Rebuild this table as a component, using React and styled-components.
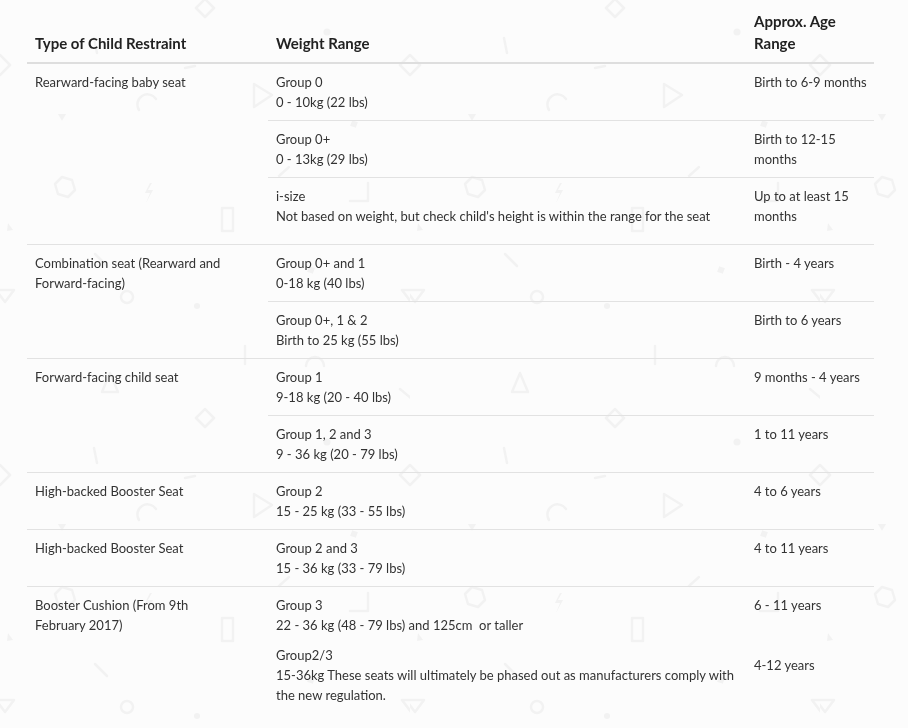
import React from 'react';
import styled, { createGlobalStyle } from 'styled-components';

const GlobalStyle = createGlobalStyle`
  html, body {
    margin: 0;
    background: #fcfcfc;
  }
  body {
    font-family: Lato, "Liberation Sans", sans-serif;
    font-size: 13px;
    line-height: 20px;
    color: #333;
  }
`;

const rows = [
  {
    type: 'Rearward-facing baby seat',
    items: [
      { group: 'Group 0', weight: '0 - 10kg (22 lbs)', age: 'Birth to 6-9 months' },
      { group: 'Group 0+', weight: '0 - 13kg (29 lbs)', age: 'Birth to 12-15 months' },
      {
        group: 'i-size',
        weight: "Not based on weight, but check child's height is within the range for the seat",
        age: 'Up to at least 15 months',
        extra: true,
      },
    ],
  },
  {
    type: 'Combination seat (Rearward and Forward-facing)',
    items: [
      { group: 'Group 0+ and 1', weight: '0-18 kg (40 lbs)', age: 'Birth - 4 years' },
      { group: 'Group 0+, 1 & 2', weight: 'Birth to 25 kg (55 lbs)', age: 'Birth to 6 years' },
    ],
  },
  {
    type: 'Forward-facing child seat',
    items: [
      { group: 'Group 1', weight: '9-18 kg (20 - 40 lbs)', age: '9 months - 4 years' },
      { group: 'Group 1, 2 and 3', weight: '9 - 36 kg (20 - 79 lbs)', age: '1 to 11 years' },
    ],
  },
  {
    type: 'High-backed Booster Seat',
    items: [{ group: 'Group 2', weight: '15 - 25 kg (33 - 55 lbs)', age: '4 to 6 years' }],
  },
  {
    type: 'High-backed Booster Seat',
    items: [{ group: 'Group 2 and 3', weight: '15 - 36 kg (33 - 79 lbs)', age: '4 to 11 years' }],
  },
];

const Backdrop = () => (
  <BackdropSvg aria-hidden="true">
    <defs>
      <pattern id="shapes" width="410" height="410" patternUnits="userSpaceOnUse">
        <g fill="none" stroke="#f2f2f2" strokeWidth="2.5" strokeLinejoin="round" strokeLinecap="round">
          <path d="M205 -1 L214 8 L205 17 L196 8 Z" />
          <path d="M205 409 L214 418 L205 427 L196 418 Z" />
          <path d="M94 38 L97 53" />
          <path d="M0 55 L10 65 L0 75 L-10 65 Z" />
          <path d="M410 55 L420 65 L410 75 L400 65 Z" />
          <path d="M185 68 L195 66" />
          <path d="M254 84 L272 95 L254 107 Z" />
          <path d="M139 110 A9 9 0 0 1 156 99" />
          <path d="M279 176 L289 167" />
          <path d="M62 177 L72 180 L75 190 L68 197 L58 194 L55 184 Z" />
          <path d="M368 183 L368 201 L350 201" />
          <rect x="222" y="208" width="11" height="23" />
          <path d="M95 254 L107 266" />
          <path d="M-4 290 L14 290 L5 302 Z" />
          <path d="M402 290 L420 290 L411 302 Z" />
          <circle cx="127" cy="297" r="6" />
          <path d="M245 346 L245 364" />
          <path d="M306 366 A9 9 0 0 1 324 366" />
          <path d="M102 392 L110 373 L118 392 Z" />
          <path d="M400 389 L412 399" />
        </g>
        <g fill="#f2f2f2">
          <circle cx="327" cy="32" r="3.5" />
          <circle cx="197" cy="306" r="3" />
          <rect x="351" y="121" width="6" height="6" transform="rotate(20 354 124)" />
          <rect x="308" y="267" width="6" height="6" transform="rotate(20 311 270)" />
          <path d="M58 114 L66 114 L62 121 Z" />
          <path d="M8 223 L13 230 L7 231 Z" />
          <path d="M150 183 L145 193 L150 193 L146 203 L153 190 L148 190 L152 183 Z" />
        </g>
      </pattern>
    </defs>
    <rect width="100%" height="100%" fill="url(#shapes)" />
  </BackdropSvg>
);

export default function App() {
  return (
    <>
      <GlobalStyle />
      <Backdrop />
      <Page>
        <Table>
          <colgroup>
            <col width="241" />
            <col width="478" />
            <col width="128" />
          </colgroup>
          <thead>
            <tr>
              <HeadCell>Type of Child Restraint</HeadCell>
              <HeadCell>Weight Range</HeadCell>
              <HeadCell $narrow>Approx. Age Range</HeadCell>
            </tr>
          </thead>
          <tbody>
            {rows.map((row, i) => (
              <Row key={i}>
                <TypeCell>{row.type}</TypeCell>
                <NestCell colSpan={2}>
                  <SubTable>
                    <colgroup>
                      <col width="478" />
                      <col width="128" />
                    </colgroup>
                    <tbody>
                      {row.items.map((item, j) => (
                        <SubRow key={j} $last={j === row.items.length - 1} $extra={item.extra}>
                          <WeightCell>
                            <div>{item.group}</div>
                            <div>{item.weight}</div>
                          </WeightCell>
                          <AgeCell>{item.age}</AgeCell>
                        </SubRow>
                      ))}
                    </tbody>
                  </SubTable>
                </NestCell>
              </Row>
            ))}
            <Row $last>
              <TypeCell>Booster Cushion (From 9th February 2017)</TypeCell>
              <NestCell colSpan={2}>
                <SubTable>
                  <colgroup>
                    <col width="478" />
                    <col width="128" />
                  </colgroup>
                  <tbody>
                    <SubRow $last>
                      <WeightCell>
                        <Block>
                          <div>Group 3</div>
                          <div>22 - 36 kg (48 - 79 lbs) and 125cm&nbsp; or taller</div>
                        </Block>
                        <Block $gap={10}>
                          <div>Group2/3</div>
                          <div>
                            15-36kg These seats will ultimately be phased out as manufacturers comply with
                            the new regulation.
                          </div>
                        </Block>
                      </WeightCell>
                      <AgeCell>
                        <Block>6 - 11 years</Block>
                        <Block $gap={40}>4-12 years</Block>
                      </AgeCell>
                    </SubRow>
                  </tbody>
                </SubTable>
              </NestCell>
            </Row>
          </tbody>
        </Table>
      </Page>
    </>
  );
}

const BackdropSvg = styled.svg`
  position: fixed;
  inset: 0;
  width: 100%;
  height: 100%;
  z-index: 0;
  pointer-events: none;
`;

const Page = styled.div`
  position: relative;
  z-index: 1;
  padding: 2px 0 0 27px;
`;

const Table = styled.table`
  width: 847px;
  table-layout: fixed;
  border-collapse: collapse;
  border-spacing: 0;
`;

const HeadCell = styled.th`
  text-align: left;
  vertical-align: bottom;
  font-size: 15px;
  line-height: 22px;
  font-weight: 700;
  color: #222;
  padding: 8px ${(p) => (p.$narrow ? '20px' : '8px')} 8px 8px;
  border-bottom: 2px solid #dedede;
`;

const Row = styled.tr`
  border-bottom: ${(p) => (p.$last ? 'none' : '1px solid #e2e2e2')};
`;

const TypeCell = styled.td`
  vertical-align: top;
  padding: 8px 37px 8px 8px;
`;

const NestCell = styled.td`
  padding: 0;
  vertical-align: top;
`;

const SubTable = styled.table`
  width: 100%;
  table-layout: fixed;
  border-collapse: collapse;
  border-spacing: 0;
`;

const SubRow = styled.tr`
  border-bottom: ${(p) => (p.$last ? 'none' : '1px solid #e2e2e2')};

  & > td {
    padding-bottom: ${(p) => (p.$extra ? '18px' : '8px')};
  }
`;

const WeightCell = styled.td`
  vertical-align: top;
  padding: 8px 4px 8px 8px;
`;

const AgeCell = styled.td`
  vertical-align: top;
  padding: 8px 4px 8px 8px;
`;

const Block = styled.div`
  margin-top: ${(p) => (p.$gap ? `${p.$gap}px` : '0')};
`;
